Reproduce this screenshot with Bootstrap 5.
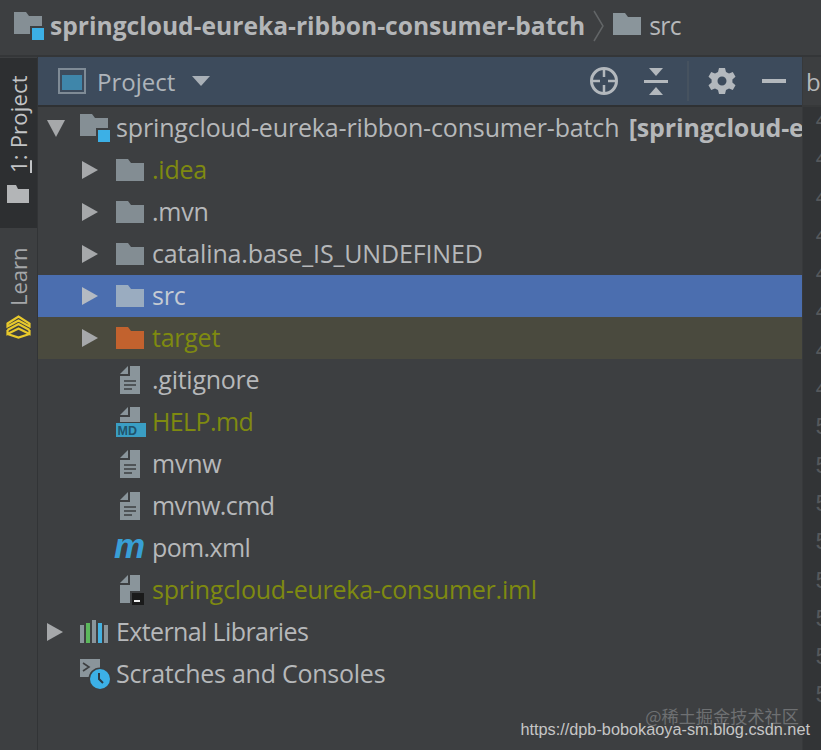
<!DOCTYPE html>
<html lang="en">
<head>
<meta charset="utf-8">
<title>Project</title>
<link rel="stylesheet" href="https://cdn.jsdelivr.net/npm/bootstrap@5.3.0/dist/css/bootstrap.min.css">
<style>
html,body{height:100%}
body{background:#3d3f41;color:#b6b8ba;font-family:"Open Sans","Noto Sans",sans-serif;overflow:hidden}
.ide{width:821px;height:750px;position:relative;overflow:hidden}
.crumbs{height:52px;padding-left:14px;padding-bottom:3px;font-size:24.6px;border-bottom:2px solid #343638;box-sizing:content-box}
.crumbs b{font-weight:700;margin-left:6px;color:#b4b6b8}
.crumbs .sepa{margin:0 9px 0 8px}
.crumbs .fold{margin-bottom:5px}
.crumbs .leaf{margin-left:8px;letter-spacing:-.6px}
.main{height:693px}
.stripe{width:38px;border-right:1px solid #323436;flex:none}
.stripetab{width:37px;writing-mode:vertical-rl;transform:rotate(180deg);font-size:22px}
.tabactive{height:170px;background:#2d2f31;color:#c2c4c6;margin-top:1px;padding-top:25px;gap:12px;letter-spacing:.2px}
.tablearn{height:110px;color:#a5a7a9;margin-top:1px;padding-top:0;gap:9px}
.stripetab svg{transform:rotate(180deg)}
.panel{width:764px;flex:none}
.phead{height:50px;background:#3d4b5c;border-bottom:2px solid #2f3133;padding-left:20px;padding-right:16px;font-size:24px}
.phead .ptitle{margin-left:11px;margin-right:17px;color:#aeb4ba;padding-top:2px}
.pbar{width:2px;height:40px;background:#46525f;margin:0 19px}
.collapse-ico{margin-left:25px}
.min-ico{margin-left:26px}
.tree{font-size:25px;letter-spacing:-.25px;white-space:nowrap;overflow:hidden}
.trow{height:42px}
.rootlbl{letter-spacing:-.15px}
.rootlbl b{margin-left:3px}
.tight{letter-spacing:-.62px}
.lv0{padding-left:8px}
.lv1{padding-left:44px}
.lvf{padding-left:78px}
.arrow{width:20px;flex:none}
.gapa{width:14px;flex:none}
.gapb{width:14px;flex:none}
.ico{width:36px;flex:none}
.olive{color:#7f8a10}
.sel{background:#4b6eaf;color:#c5cbd3}
.tgt{background:#4a4a3e}
.gutter{flex:1;background:#323436;border-left:1px solid #37393b;position:relative;overflow:hidden}
.gtab{height:50px;background:#3c3e40;border-bottom:2px solid #37393a;padding-left:3px;font-size:24px;color:#b6b8ba;line-height:50px}
.gnums{font-family:"Liberation Mono",monospace;font-size:24px;line-height:38.3px;color:#55585b;padding-left:12px;margin-top:-4px}
.mark-m{font-family:"Liberation Sans",sans-serif;font-weight:700;font-style:italic;font-size:35px;line-height:36px;color:#389fd6;letter-spacing:0;display:block;margin-top:-5px;margin-left:-2px}
.wm{position:absolute;pointer-events:none;white-space:nowrap}
.wm1{right:22px;bottom:21px;font-family:"Noto Sans CJK SC","Noto Sans",sans-serif;font-size:17.2px;color:#6e7072}
.wm2{right:11px;bottom:9px;font-family:"Liberation Sans",sans-serif;font-size:16.3px;color:#c6c6c6}
</style>
</head>
<body>
<div class="ide">
  <div class="crumbs d-flex align-items-center">
    <svg width="30" height="28" viewBox="0 0 30 28"><path d="M0 0H12L15 4H28V22H0Z" fill="#858f95"/><rect x="16" y="14" width="14" height="14" fill="#3d3f41"/><rect x="18" y="16" width="12" height="12" fill="#3cb0e6"/></svg>
    <b>springcloud-eureka-ribbon-consumer-batch</b>
    <svg class="sepa" width="11" height="32" viewBox="0 0 11 32"><path d="M1 1L10 16L1 31" fill="none" stroke="#626567" stroke-width="1.5"/></svg>
    <svg class="fold" width="28" height="22" viewBox="0 0 28 22"><path d="M0 0H12L15 4H28V22H0Z" fill="#8a959b"/></svg>
    <span class="leaf">src</span>
  </div>
  <div class="main d-flex">
    <div class="stripe d-flex flex-column">
      <div class="stripetab tabactive d-flex align-items-center">
        <svg width="22" height="18" viewBox="0 0 22 18"><path d="M0 0H9L11 4H22V18H0Z" fill="#b3b5b7"/></svg>
        <span><u>1</u>: Project</span>
      </div>
      <div class="stripetab tablearn d-flex align-items-center">
        <svg width="25" height="24" viewBox="0 0 25 24"><g fill="none" stroke="#e8c92c" stroke-width="2.2"><path d="M1.5 8.5L12.5 1.5L23.5 8.5V11.5L12.5 5.5L1.5 11.5Z"/><path d="M1.5 15L12.5 9L23.5 15"/><path d="M1.5 15V19L12.5 13.5L23.5 19V15"/><path d="M1.5 19L12.5 22.5L23.5 19"/></g></svg>
        <span>Learn</span>
      </div>
    </div>
    <div class="panel d-flex flex-column">
      <div class="phead d-flex align-items-center">
        <svg width="28" height="26" viewBox="0 0 28 26"><rect x="1" y="1" width="26" height="24" fill="none" stroke="#7f8b96" stroke-width="2"/><rect x="4" y="7" width="20" height="15" fill="#3f86aa"/></svg>
        <span class="ptitle">Project</span>
        <svg width="18" height="10" viewBox="0 0 18 10"><path d="M0 0H18L9 10Z" fill="#a9b0b7"/></svg>
        <div class="flex-grow-1"></div>
        <svg width="30" height="30" viewBox="0 0 30 30"><g fill="none" stroke="#b3b8bd" stroke-width="3"><circle cx="15" cy="15" r="12.5"/><path d="M15 2V11M15 19V28M2 15H11M19 15H28" stroke-width="2.5"/></g></svg>
        <svg class="collapse-ico" width="24" height="27" viewBox="0 0 24 27"><g fill="#b3b8bd"><path d="M5 0H19L12 8Z"/><rect y="12" width="24" height="3"/><path d="M5 27H19L12 19Z"/></g></svg>
        <div class="pbar"></div>
        <svg width="28" height="28" viewBox="0 0 28 28"><path fill="#b3b8bd" fill-rule="evenodd" d="M11 1H17L18 5L21 6.6L24.8 5L27.5 9.8L24.4 12.4V15.6L27.5 18.2L24.8 23L21 21.4L18 23L17 27H11L10 23L7 21.4L3.2 23L.5 18.2L3.6 15.6V12.4L.5 9.8L3.2 5L7 6.6L10 5ZM14 9.5A4.5 4.5 0 1 0 14 18.5A4.5 4.5 0 1 0 14 9.5Z"/></svg>
        <svg class="min-ico" width="24" height="4" viewBox="0 0 24 4"><rect width="24" height="4" fill="#b3b8bd"/></svg>
      </div>
      <div class="tree flex-grow-1">
        <div class="trow d-flex align-items-center lv0">
          <svg class="arrow" height="18" viewBox="0 0 20 18"><path d="M1 1H19L10 18Z" fill="#a6a8aa"/></svg>
          <span class="gapa"></span>
          <svg class="ico" height="28" viewBox="0 0 36 28"><path d="M0 0H12L15 4H28V22H0Z" fill="#858f95"/><rect x="16" y="14" width="14" height="14" fill="#3d3f41"/><rect x="18" y="16" width="12" height="12" fill="#3cb0e6"/></svg>
          <span class="rootlbl">springcloud-eureka-ribbon-consumer-batch <b>[springcloud-eureka-consumer]</b></span>
        </div>
        <div class="trow d-flex align-items-center lv1">
          <svg class="arrow" height="18" viewBox="0 0 20 18"><path d="M0 0L16 9L0 18Z" fill="#a6a8aa"/></svg>
          <span class="gapb"></span>
          <svg class="ico" height="22" viewBox="0 0 36 22"><path d="M0 0H12L15 4H28V22H0Z" fill="#838d93"/></svg>
          <span class="olive">.idea</span>
        </div>
        <div class="trow d-flex align-items-center lv1">
          <svg class="arrow" height="18" viewBox="0 0 20 18"><path d="M0 0L16 9L0 18Z" fill="#a6a8aa"/></svg>
          <span class="gapb"></span>
          <svg class="ico" height="22" viewBox="0 0 36 22"><path d="M0 0H12L15 4H28V22H0Z" fill="#838d93"/></svg>
          <span>.mvn</span>
        </div>
        <div class="trow d-flex align-items-center lv1">
          <svg class="arrow" height="18" viewBox="0 0 20 18"><path d="M0 0L16 9L0 18Z" fill="#a6a8aa"/></svg>
          <span class="gapb"></span>
          <svg class="ico" height="22" viewBox="0 0 36 22"><path d="M0 0H12L15 4H28V22H0Z" fill="#838d93"/></svg>
          <span class="rootlbl">catalina.base_IS_UNDEFINED</span>
        </div>
        <div class="trow d-flex align-items-center lv1 sel">
          <svg class="arrow" height="18" viewBox="0 0 20 18"><path d="M0 0L16 9L0 18Z" fill="#b4bac2"/></svg>
          <span class="gapb"></span>
          <svg class="ico" height="22" viewBox="0 0 36 22"><path d="M0 0H12L15 4H28V22H0Z" fill="#9aacc0"/></svg>
          <span>src</span>
        </div>
        <div class="trow d-flex align-items-center lv1 tgt">
          <svg class="arrow" height="18" viewBox="0 0 20 18"><path d="M0 0L16 9L0 18Z" fill="#a6a8aa"/></svg>
          <span class="gapb"></span>
          <svg class="ico" height="22" viewBox="0 0 36 22"><path d="M0 0H12L15 4H28V22H0Z" fill="#c2622e"/></svg>
          <span class="olive">target</span>
        </div>
        <div class="trow d-flex align-items-center lvf">
          <svg class="ico" height="28" viewBox="0 0 36 28"><path d="M4 8L12 0V8ZM14 0H24V28H4V10H14Z" fill="#8a959b"/><path d="M8 15H20M8 19H20M8 23H16" stroke="#3d3f41" stroke-width="1.6"/></svg>
          <span>.gitignore</span>
        </div>
        <div class="trow d-flex align-items-center lvf">
          <svg class="ico" height="30" viewBox="0 0 36 30"><path d="M4 8L12 0V8ZM14 0H24V15H4V10H14Z" fill="#8a959b"/><rect y="16" width="30" height="14" fill="#3a9ec4"/><text x="1.5" y="28" font-family="Liberation Sans,sans-serif" font-weight="700" font-size="12.5" letter-spacing="0" fill="#21536b">MD</text></svg>
          <span class="olive tight">HELP.md</span>
        </div>
        <div class="trow d-flex align-items-center lvf">
          <svg class="ico" height="28" viewBox="0 0 36 28"><path d="M4 8L12 0V8ZM14 0H24V28H4V10H14Z" fill="#8a959b"/><path d="M8 15H20M8 19H20M8 23H16" stroke="#3d3f41" stroke-width="1.6"/></svg>
          <span>mvnw</span>
        </div>
        <div class="trow d-flex align-items-center lvf">
          <svg class="ico" height="28" viewBox="0 0 36 28"><path d="M4 8L12 0V8ZM14 0H24V28H4V10H14Z" fill="#8a959b"/><path d="M8 15H20M8 19H20M8 23H16" stroke="#3d3f41" stroke-width="1.6"/></svg>
          <span class="tight">mvnw.cmd</span>
        </div>
        <div class="trow d-flex align-items-center lvf">
          <span class="ico"><span class="mark-m">m</span></span>
          <span class="tight">pom.xml</span>
        </div>
        <div class="trow d-flex align-items-center lvf">
          <svg class="ico" height="30" viewBox="0 0 36 30"><path d="M4 8L12 0V8ZM14 0H24V28H4V10H14Z" fill="#8a959b"/><rect x="14" y="16" width="16" height="14" fill="#3d3f41"/><rect x="16" y="18" width="12" height="12" fill="#1a1a1a"/><rect x="18" y="25" width="6" height="2" fill="#eee"/></svg>
          <span class="olive">springcloud-eureka-consumer.iml</span>
        </div>
        <div class="trow d-flex align-items-center lv0">
          <svg class="arrow" height="18" viewBox="0 0 20 18"><path d="M1 0L17 9L1 18Z" fill="#a6a8aa"/></svg>
          <span class="gapa"></span>
          <svg class="ico" height="24" viewBox="0 0 36 24"><g fill="#8a959b"><rect y="5" width="4" height="18"/><rect x="12" y="0" width="4" height="23"/><rect x="24" y="5" width="4" height="18"/></g><rect x="6" y="3" width="4" height="20" fill="#5cb85c"/><rect x="18" y="3" width="4" height="20" fill="#45b1e0"/></svg>
          <span class="tight">External Libraries</span>
        </div>
        <div class="trow d-flex align-items-center lv0">
          <span class="arrow"></span>
          <span class="gapa"></span>
          <svg class="ico" height="30" viewBox="0 0 36 30"><rect width="20" height="18" fill="#8a959b"/><path d="M3 4L9 8L3 12" fill="none" stroke="#3d3f41" stroke-width="1.6"/><circle cx="20" cy="20" r="11.5" fill="#3d3f41"/><circle cx="20" cy="20" r="10" fill="#3cb0e6"/><path d="M19 14V20L23 24" fill="none" stroke="#2a3a45" stroke-width="2"/></svg>
          <span>Scratches and Consoles</span>
        </div>
      </div>
    </div>
    <div class="gutter">
      <div class="gtab">b</div>
      <div class="gnums">4<br>4<br>4<br>4<br>4<br>4<br>4<br>4<br>5<br>5<br>5<br>5<br>5<br>5<br>5<br>5</div>
    </div>
  </div>
  <div class="wm wm1">@稀土掘金技术社区</div>
  <div class="wm wm2">https://dpb-bobokaoya-sm.blog.csdn.net</div>
</div>
</body>
</html>
